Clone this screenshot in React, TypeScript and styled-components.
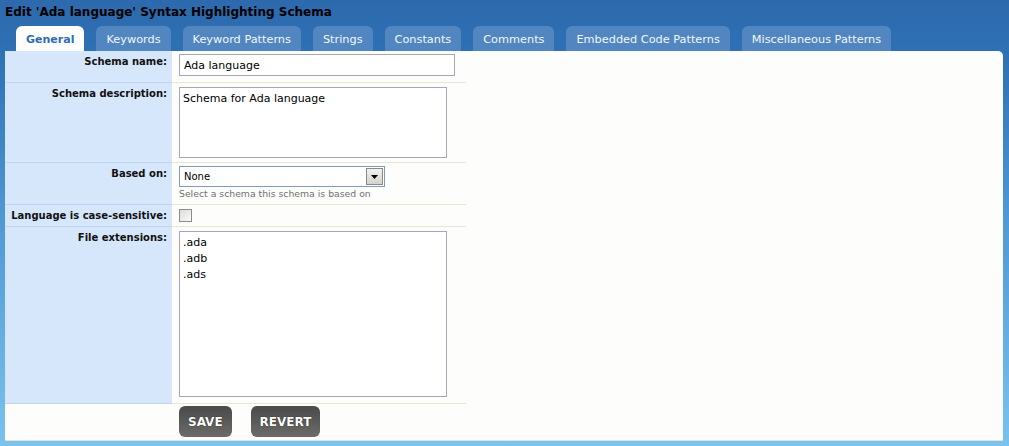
import styled, { createGlobalStyle } from "styled-components";
import { useState } from "react";

const GlobalStyle = createGlobalStyle`
  html, body {
    margin: 0;
    padding: 0;
  }
  body {
    font-family: "DejaVu Sans", Verdana, sans-serif;
    background: linear-gradient(
      to bottom,
      #2d69ad 0%,
      #2f72b6 14%,
      #4b95d3 45%,
      #7ac3ee 100%
    );
    min-height: 446px;
  }
`;

const tabs = [
  "General",
  "Keywords",
  "Keyword Patterns",
  "Strings",
  "Constants",
  "Comments",
  "Embedded Code Patterns",
  "Miscellaneous Patterns",
];

const App = () => {
  const [active, setActive] = useState(0);
  const [name, setName] = useState("Ada language");
  const [desc, setDesc] = useState("Schema for Ada language");
  const [ext, setExt] = useState(".ada\n.adb\n.ads");
  const [caseSens, setCaseSens] = useState(false);

  return (
    <Page>
      <GlobalStyle />
      <Title>Edit 'Ada language' Syntax Highlighting Schema</Title>
      <TabBar>
        {tabs.map((t, i) => (
          <Tab key={t} active={i === active} onClick={() => setActive(i)}>
            {t}
          </Tab>
        ))}
      </TabBar>
      <Panel>
        <FormTable>
          <tbody>
            <Row>
              <Label>Schema name:</Label>
              <Value pt={3} pb={6}>
                <TextInput
                  value={name}
                  onChange={(e: any) => setName(e.target.value)}
                />
              </Value>
            </Row>
            <Row>
              <Label>Schema description:</Label>
              <Value pt={4} pb={4}>
                <TextArea
                  h={71}
                  value={desc}
                  onChange={(e: any) => setDesc(e.target.value)}
                />
              </Value>
            </Row>
            <Row>
              <Label>Based on:</Label>
              <Value pt={3} pb={5}>
                <Select>
                  <SelectText>None</SelectText>
                  <SelectButton>
                    <svg width="7" height="4" viewBox="0 0 7 4">
                      <path d="M0 0h7L3.5 4z" fill="#000" />
                    </svg>
                  </SelectButton>
                </Select>
                <Help>Select a schema this schema is based on</Help>
              </Value>
            </Row>
            <Row>
              <Label>Language is case-sensitive:</Label>
              <Value pt={4} pb={4}>
                <Check
                  checked={caseSens}
                  onClick={() => setCaseSens(!caseSens)}
                />
              </Value>
            </Row>
            <Row>
              <Label>File extensions:</Label>
              <Value pt={4} pb={6}>
                <TextArea
                  h={166}
                  value={ext}
                  onChange={(e: any) => setExt(e.target.value)}
                />
              </Value>
            </Row>
            <Row>
              <Empty />
              <Value pt={2} pb={3}>
                <Buttons>
                  <Button>SAVE</Button>
                  <Button>REVERT</Button>
                </Buttons>
              </Value>
            </Row>
          </tbody>
        </FormTable>
      </Panel>
    </Page>
  );
};

export default App;

const Page = styled.div`
  width: 1009px;
  height: 446px;
  display: flex;
  flex-direction: column;
  overflow: hidden;
`;

const Title = styled.div`
  height: 26px;
  padding: 5px 0 0 5px;
  box-sizing: border-box;
  font-size: 12px;
  font-weight: 700;
  color: #000;
  line-height: 15px;
`;

const TabBar = styled.div`
  display: flex;
  gap: 12px;
  padding-left: 16px;
  height: 25px;
`;

const Tab = styled.div<{ active: boolean }>`
  height: 25px;
  padding: 2px 10px 0;
  display: flex;
  align-items: center;
  box-sizing: border-box;
  border-radius: 6px 6px 0 0;
  cursor: pointer;
  white-space: nowrap;
  font-weight: ${({ active }) => (active ? "700" : "400")};
  font-size: ${({ active }) => (active ? "11px" : "11.3px")};
  color: ${({ active }) => (active ? "#2e6db3" : "#f2f6fb")};
  background: ${({ active }) => (active ? "#fdfdfb" : "#5186c0")};
`;

const Panel = styled.div`
  margin: 0 6px 0 5px;
  height: 389px;
  background: #fdfdfb;
  border-radius: 0 5px 0 0;
  border-bottom: 1px solid #e4e2cf;
`;

const FormTable = styled.table`
  width: 461px;
  border-collapse: collapse;
  border-spacing: 0;
`;

const Row = styled.tr`
  border-bottom: 1px solid #e6e6d4;
  &:last-child {
    border-bottom: none;
  }
`;

const Label = styled.td`
  width: 162px;
  padding: 5px 5px 0 0;
  vertical-align: top;
  text-align: right;
  white-space: nowrap;
  background: #d6e6fb;
  border-bottom: 1px solid #bfd4f2;
  font-size: 10px;
  font-weight: 700;
  color: #111;
  line-height: 12px;
`;

const Empty = styled.td`
  padding: 0;
`;

const Value = styled.td<{ pt: number; pb: number }>`
  width: 287px;
  padding: ${({ pt, pb }) => `${pt}px 0 ${pb}px 7px`};
  vertical-align: top;
`;

const TextInput = styled.input`
  display: block;
  width: 276px;
  height: 22px;
  box-sizing: border-box;
  border: 1px solid #a6a6b6;
  padding: 1px 4px;
  font-family: "DejaVu Sans", Verdana, sans-serif;
  font-size: 11px;
  color: #000;
  background: #fff;
  outline: none;
`;

const TextArea = styled.textarea<{ h: number }>`
  display: block;
  width: 268px;
  height: ${({ h }) => h}px;
  box-sizing: border-box;
  border: 1px solid #a6a6b6;
  padding: 3px;
  font-family: "DejaVu Sans", Verdana, sans-serif;
  font-size: 11px;
  line-height: 16px;
  color: #000;
  background: #fff;
  resize: none;
  outline: none;
`;

const Select = styled.div`
  width: 206px;
  height: 21px;
  box-sizing: border-box;
  border: 1px solid #7f9db9;
  background: #fff;
  display: flex;
  align-items: stretch;
`;

const SelectText = styled.div`
  flex: 1;
  padding-left: 4px;
  display: flex;
  align-items: center;
  font-size: 10px;
  color: #000;
`;

const SelectButton = styled.div`
  width: 15px;
  margin: 1px;
  border: 1px solid #8a8a8a;
  background: linear-gradient(#f2f2f0, #d2d2ce);
  display: flex;
  align-items: center;
  justify-content: center;
`;

const Help = styled.div`
  font-size: 9.3px;
  color: #707070;
  margin-top: 1px;
  line-height: 11px;
`;

const Check = styled.div<{ checked: boolean }>`
  width: 13px;
  height: 13px;
  box-sizing: border-box;
  border: 1px solid #8c8c8c;
  background: linear-gradient(135deg, #dcdcd8, #fbfbf9);
  cursor: pointer;
`;

const Buttons = styled.div`
  display: flex;
  gap: 19px;
`;

const Button = styled.div`
  height: 31px;
  padding: 1px 9px 0;
  box-sizing: border-box;
  display: flex;
  align-items: center;
  border-radius: 6px;
  background: linear-gradient(#4a4b49, #6b6c6a);
  color: #fff;
  font-size: 12px;
  font-weight: 700;
  text-shadow: 0 0 1px #000;
  cursor: pointer;
`;
